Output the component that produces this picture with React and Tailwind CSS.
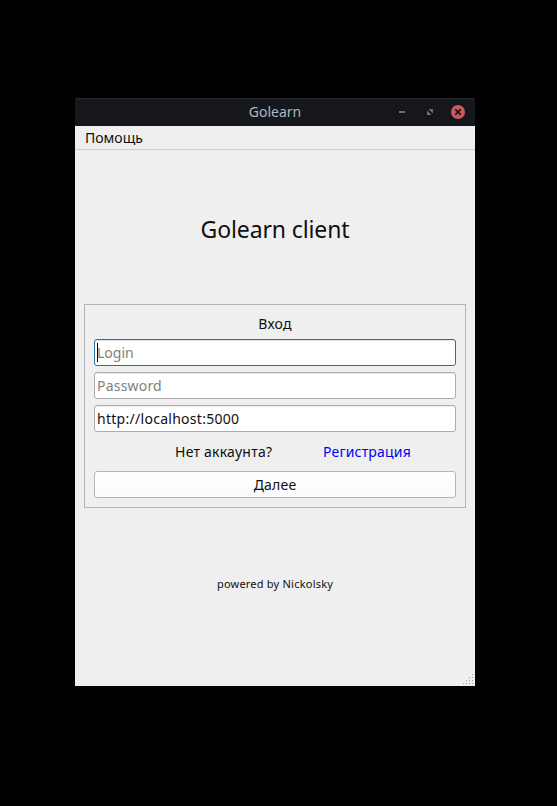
const gripDots = [
  [9, 0], [6, 3], [9, 3], [3, 6], [6, 6], [9, 6], [0, 9], [3, 9], [6, 9], [9, 9],
];

function TitleBar() {
  return (
    <header className="flex h-7 items-center rounded-t-[2px] border-t border-[#2b2d33] bg-[#16171c] pr-[10px]">
      <div className="w-[76px]" />
      <h1 className="flex-1 pb-[2px] pl-1 text-center text-[14px] leading-[25px] text-[#a9b8c1]">Golearn</h1>
      <svg className="mb-px h-[14px] w-[70px] shrink-0" viewBox="0 0 70 14">
        <rect x="4" y="6" width="6" height="2" fill="#69717b" />
        <path d="M33.5 4h4.5v4.5zM32 5.5v4.5h4.5z" fill="#69717b" />
        <circle cx="63" cy="7" r="7" fill="#cc575d" />
        <path d="M60.3 4.3l5.4 5.4M65.7 4.3l-5.4 5.4" stroke="#16171c" strokeWidth="1.8" />
      </svg>
    </header>
  );
}

function Field({ children, className }) {
  return (
    <div className={"flex h-[27px] items-center rounded-[3px] border bg-white pl-[2px] leading-5 " + className}>
      {children}
    </div>
  );
}

export default function App() {
  return (
    <div className="h-[806px] w-[557px] bg-black pl-[75px] pt-[98px] font-['Noto_Sans',sans-serif] text-[14px] text-[#101010]">
      <main className="flex h-[588px] w-[400px] flex-col">
        <TitleBar />
        <nav className="h-6 border-b border-[#d0d0d0] bg-[#efefef] pl-[10px] leading-[24px]">Помощь</nav>
        <div className="flex flex-1 flex-col bg-[#efefef] px-[9px]">
          <h2 className="mt-[61px] text-center text-[23px] leading-9 tracking-[-0.12px]">Golearn client</h2>
          <section className="mt-[57px] h-[204px] border border-[#b5b5b5] px-[9px] pt-[9px]">
            <div className="h-[25px] text-center leading-5 tracking-[0.2px]">Вход</div>
            <div className="flex flex-col gap-[6px]">
              <Field className="border-[#2a6f9b] text-[#7f7f7f] shadow-[inset_0_1px_0_#d5e3ec]">
                <span className="-mr-px h-[19px] w-px bg-black" />
                Login
              </Field>
              <Field className="border-[#acacac] tracking-[0.2px] text-[#7f7f7f] shadow-[inset_0_1px_0_#eeeeee]">Password</Field>
              <Field className="border-[#acacac] tracking-[0.28px] shadow-[inset_0_1px_0_#eeeeee]">http://localhost:5000</Field>
            </div>
            <div className="flex h-[39px] items-center pl-[81px]">
              <span className="w-[148px] tracking-[0.23px]">Нет аккаунта?</span>
              <a className="tracking-[0.18px] text-[#0000ff]">Регистрация</a>
            </div>
            <button className="block h-[27px] w-full rounded-[3px] border border-[#b5b5b5] bg-linear-to-b from-white to-[#fafafa] text-center leading-[25px] tracking-[0.2px]">
              Далее
            </button>
          </section>
          <footer className="mt-[67px] text-center text-[11px] leading-[18px] tracking-[0.22px]">powered by Nickolsky</footer>
          <svg className="mb-[2px] mr-[-7px] mt-auto h-[10px] w-[10px] self-end" viewBox="0 0 10 10" shapeRendering="crispEdges">
            {gripDots.map(([x, y]) => (
              <rect key={x + "-" + y} x={x} y={y} width="1" height="1" fill="#a0a0a0" />
            ))}
          </svg>
        </div>
      </main>
    </div>
  );
}
